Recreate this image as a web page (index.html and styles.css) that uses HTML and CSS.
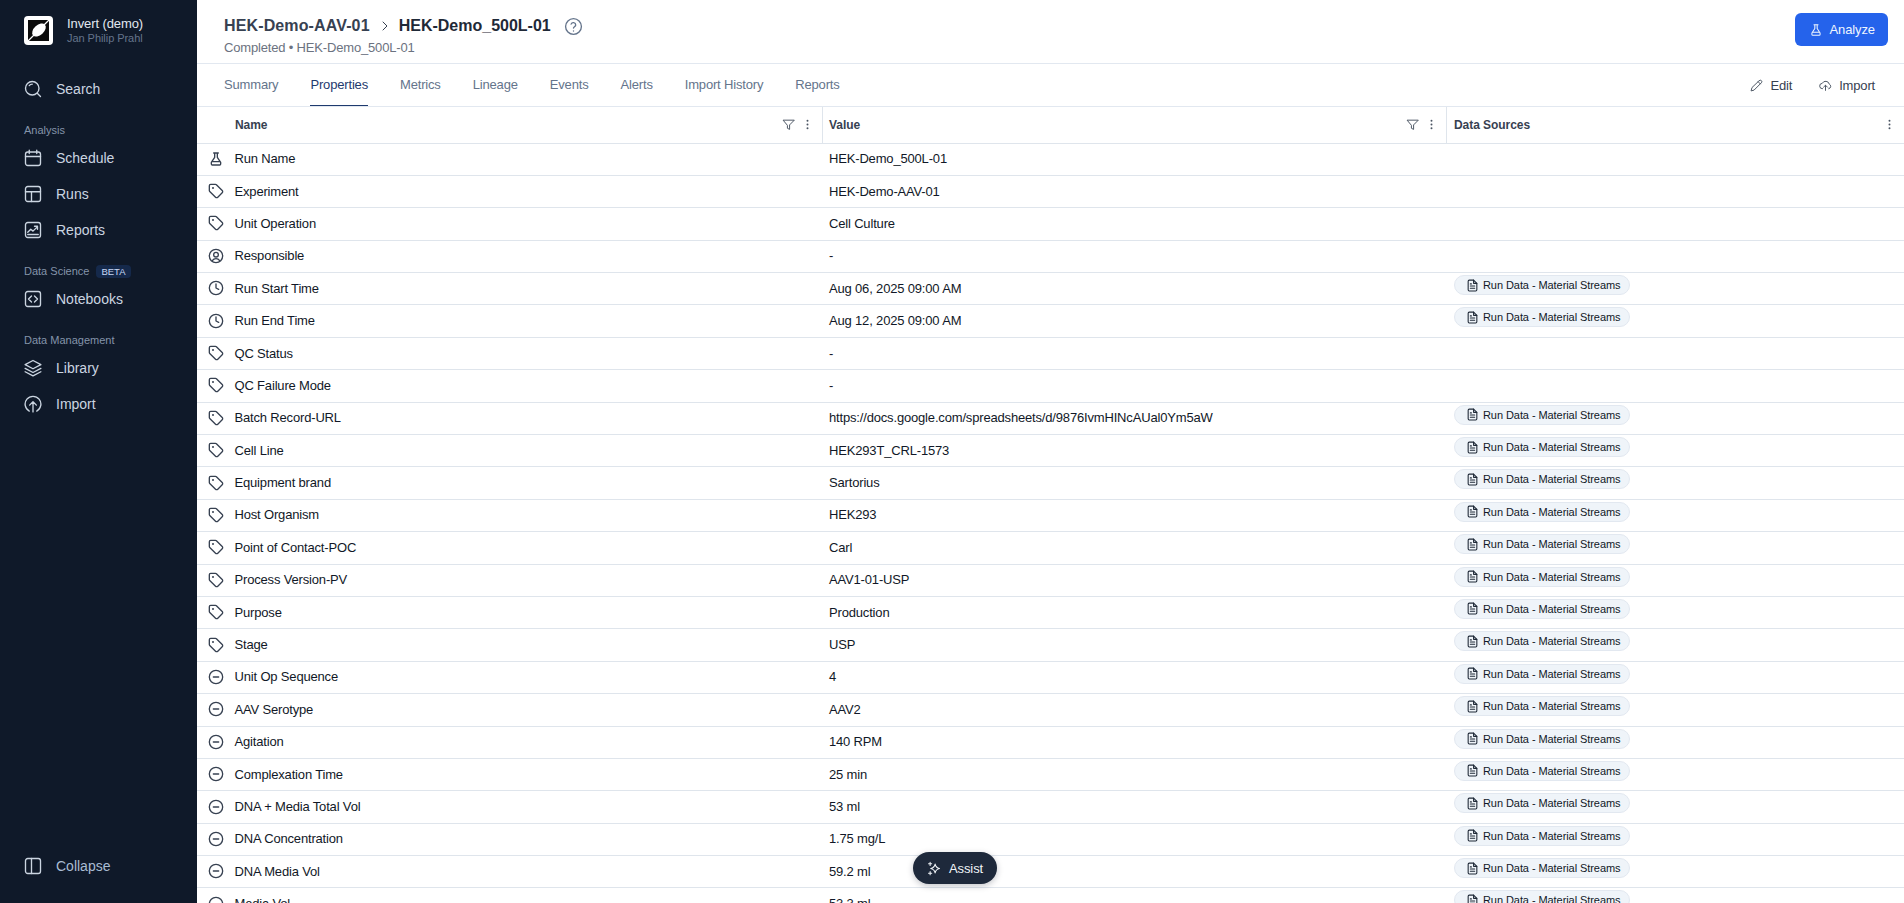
FILE: index.html
```html
<!DOCTYPE html>
<html lang="en">
<head>
<meta charset="utf-8">
<title>HEK-Demo_500L-01</title>
<link rel="stylesheet" href="styles.css">
</head>
<body>
<svg class="defs" aria-hidden="true">
  <symbol id="i-flask" viewBox="0 0 24 24"><path d="M8.500 3h7M10 3v6.500L5 17v2.500A1.500 1.500 0 0 0 6.500 21h11a1.500 1.500 0 0 0 1.500-1.500V17L14 9.500V3M6 16h12"/></symbol>
  <symbol id="i-tag" viewBox="0 0 24 24"><path d="M12.600 2.600a2 2 0 0 0-1.400-.6H4a2 2 0 0 0-2 2v7.200a2 2 0 0 0 .6 1.400l8.700 8.700a2.400 2.400 0 0 0 3.400 0l6.600-6.600a2.400 2.400 0 0 0 0-3.400z"/><circle cx="7.500" cy="7.500" r=".6"/></symbol>
  <symbol id="i-user" viewBox="0 0 24 24"><circle cx="12" cy="12" r="10"/><circle cx="12" cy="10" r="3.500"/><path d="M6.500 19a6.500 6.500 0 0 1 11 0"/></symbol>
  <symbol id="i-clock" viewBox="0 0 24 24"><circle cx="12" cy="12" r="10"/><path d="M12 6v6l4 2"/></symbol>
  <symbol id="i-minus" viewBox="0 0 24 24"><circle cx="12" cy="12" r="10"/><path d="M8 12h8"/></symbol>
  <symbol id="i-file" viewBox="0 0 24 24"><path d="M14 2H6a2 2 0 0 0-2 2v16a2 2 0 0 0 2 2h12a2 2 0 0 0 2-2V8z"/><path d="M14 2v6h6M8 13h8M8 17h8M8 9h2"/></symbol>
  <symbol id="i-filter" viewBox="0 0 24 24"><path d="M22 4H2l8 9.500V19l4 2v-7.500z"/></symbol>
  <symbol id="i-more" viewBox="0 0 24 24"><circle class="solid" cx="12" cy="5" r="1.800"/><circle class="solid" cx="12" cy="12" r="1.800"/><circle class="solid" cx="12" cy="19" r="1.800"/></symbol>
</svg>

<div class="app">
  <aside class="sidebar">
    <div class="brand">
      <svg class="logo" viewBox="0 0 29 29"><rect class="logo-edge" width="29" height="29" rx="4"/><rect class="logo-ink" x="4" y="4" width="21" height="21"/><ellipse class="logo-edge" cx="15" cy="14" rx="8" ry="5" transform="rotate(-42 15 14)"/><path class="logo-line" d="M4.500 24.500 24.500 4.500"/></svg>
      <div class="brand-text">
        <div class="brand-name">Invert (demo)</div>
        <div class="brand-user">Jan Philip Prahl</div>
      </div>
    </div>
    <nav class="nav">
      <a class="nav-item search-item"><svg class="nav-icon" viewBox="0 0 24 24"><circle cx="11" cy="11" r="9"/><path d="m18 18 4 4M7 7.500a5 5 0 0 1 4-2"/></svg>Search</a>
      <div class="nav-label">Analysis</div>
      <a class="nav-item"><svg class="nav-icon" viewBox="0 0 24 24"><rect x="2" y="4" width="20" height="18" rx="3"/><path d="M2 10h20M7 1.500V6M17 1.500V6"/></svg>Schedule</a>
      <a class="nav-item"><svg class="nav-icon" viewBox="0 0 24 24"><rect x="2" y="2" width="20" height="20" rx="3"/><path d="M2 9h20M10 9v13"/></svg>Runs</a>
      <a class="nav-item"><svg class="nav-icon" viewBox="0 0 24 24"><rect x="2" y="2" width="20" height="20" rx="3"/><path d="m5 15 4-4 3 2.500 6-6M14 7h4v4M5 18h14"/></svg>Reports</a>
      <div class="nav-label label-beta">Data Science <span class="beta">BETA</span></div>
      <a class="nav-item"><svg class="nav-icon" viewBox="0 0 24 24"><rect x="2" y="2" width="20" height="20" rx="3"/><path d="M10 8l-4 4 4 4M14 8l4 4-4 4"/></svg>Notebooks</a>
      <div class="nav-label">Data Management</div>
      <a class="nav-item"><svg class="nav-icon" viewBox="0 0 24 24"><path d="m12 2 10.500 5.500L12 13 1.500 7.500z"/><path d="m1.500 12.500 10.500 5.500 10.500-5.500M1.500 17 12 22.500 22.500 17"/></svg>Library</a>
      <a class="nav-item"><svg class="nav-icon" viewBox="0 0 24 24"><path d="M7 21.500a10.500 10.500 0 1 1 10 0"/><path d="M12 22.500V9M7.500 13.500 12 9l4.500 4.500"/></svg>Import</a>
    </nav>
    <a class="nav-item collapse-item"><svg class="nav-icon" viewBox="0 0 24 24"><rect x="2" y="2" width="20" height="20" rx="3"/><path d="M10 2v20"/></svg>Collapse</a>
  </aside>

  <main class="main">
    <header class="topbar">
      <div>
        <div class="crumbs">
          <span class="crumb-parent">HEK-Demo-AAV-01</span>
          <svg class="crumb-sep" viewBox="0 0 24 24"><path d="m8 4 8 8-8 8"/></svg>
          <span class="crumb-current">HEK-Demo_500L-01</span>
          <svg class="help" viewBox="0 0 24 24"><circle cx="12" cy="12" r="10"/><path d="M9 9a3 3 0 0 1 5.800 1c0 2-2.800 2.500-2.800 4M12 17.500v.2"/></svg>
        </div>
        <div class="subtitle">Completed • HEK-Demo_500L-01</div>
      </div>
      <button class="analyze"><svg class="btn-icon" viewBox="0 0 24 24"><use href="#i-flask"/></svg>Analyze</button>
    </header>

    <div class="tabs">
      <a class="tab">Summary</a>
      <a class="tab active">Properties</a>
      <a class="tab">Metrics</a>
      <a class="tab">Lineage</a>
      <a class="tab">Events</a>
      <a class="tab">Alerts</a>
      <a class="tab">Import History</a>
      <a class="tab">Reports</a>
      <div class="tab-actions">
        <a class="action"><svg class="act-icon" viewBox="0 0 24 24"><path d="M17 3a2.800 2.800 0 0 1 4 4L7.500 20.500 2 22l1.500-5.500zM15 5l4 4"/></svg>Edit</a>
        <a class="action"><svg class="act-icon" viewBox="0 0 24 24"><path d="M6.500 18A5 5 0 0 1 6 8a7 7 0 0 1 13 1.500 4.500 4.500 0 0 1-1 8.500M12 21v-9M8.500 15 12 11.500l3.500 3.500"/></svg>Import</a>
      </div>
    </div>

    <div class="table">
      <div class="row head">
        <div class="cell name-head"><span class="grow">Name</span><svg class="hicon" viewBox="0 0 24 24"><use href="#i-filter"/></svg><svg class="hicon" viewBox="0 0 24 24"><use href="#i-more"/></svg></div>
        <div class="cell"><span class="grow">Value</span><svg class="hicon" viewBox="0 0 24 24"><use href="#i-filter"/></svg><svg class="hicon" viewBox="0 0 24 24"><use href="#i-more"/></svg></div>
        <div class="cell"><span class="grow">Data Sources</span><svg class="hicon" viewBox="0 0 24 24"><use href="#i-more"/></svg></div>
      </div>
      <div class="row"><div class="cell name"><svg class="ricon"><use href="#i-flask"/></svg>Run Name</div><div class="cell">HEK-Demo_500L-01</div><div class="cell"></div></div>
      <div class="row"><div class="cell name"><svg class="ricon"><use href="#i-tag"/></svg>Experiment</div><div class="cell">HEK-Demo-AAV-01</div><div class="cell"></div></div>
      <div class="row"><div class="cell name"><svg class="ricon"><use href="#i-tag"/></svg>Unit Operation</div><div class="cell">Cell Culture</div><div class="cell"></div></div>
      <div class="row"><div class="cell name"><svg class="ricon"><use href="#i-user"/></svg>Responsible</div><div class="cell">-</div><div class="cell"></div></div>
      <div class="row"><div class="cell name"><svg class="ricon"><use href="#i-clock"/></svg>Run Start Time</div><div class="cell">Aug 06, 2025 09:00 AM</div><div class="cell"><span class="chip"><svg class="chip-icon"><use href="#i-file"/></svg>Run Data - Material Streams</span></div></div>
      <div class="row"><div class="cell name"><svg class="ricon"><use href="#i-clock"/></svg>Run End Time</div><div class="cell">Aug 12, 2025 09:00 AM</div><div class="cell"><span class="chip"><svg class="chip-icon"><use href="#i-file"/></svg>Run Data - Material Streams</span></div></div>
      <div class="row"><div class="cell name"><svg class="ricon"><use href="#i-tag"/></svg>QC Status</div><div class="cell">-</div><div class="cell"></div></div>
      <div class="row"><div class="cell name"><svg class="ricon"><use href="#i-tag"/></svg>QC Failure Mode</div><div class="cell">-</div><div class="cell"></div></div>
      <div class="row"><div class="cell name"><svg class="ricon"><use href="#i-tag"/></svg>Batch Record-URL</div><div class="cell">https://docs.google.com/spreadsheets/d/9876IvmHINcAUal0Ym5aW</div><div class="cell"><span class="chip"><svg class="chip-icon"><use href="#i-file"/></svg>Run Data - Material Streams</span></div></div>
      <div class="row"><div class="cell name"><svg class="ricon"><use href="#i-tag"/></svg>Cell Line</div><div class="cell">HEK293T_CRL-1573</div><div class="cell"><span class="chip"><svg class="chip-icon"><use href="#i-file"/></svg>Run Data - Material Streams</span></div></div>
      <div class="row"><div class="cell name"><svg class="ricon"><use href="#i-tag"/></svg>Equipment brand</div><div class="cell">Sartorius</div><div class="cell"><span class="chip"><svg class="chip-icon"><use href="#i-file"/></svg>Run Data - Material Streams</span></div></div>
      <div class="row"><div class="cell name"><svg class="ricon"><use href="#i-tag"/></svg>Host Organism</div><div class="cell">HEK293</div><div class="cell"><span class="chip"><svg class="chip-icon"><use href="#i-file"/></svg>Run Data - Material Streams</span></div></div>
      <div class="row"><div class="cell name"><svg class="ricon"><use href="#i-tag"/></svg>Point of Contact-POC</div><div class="cell">Carl</div><div class="cell"><span class="chip"><svg class="chip-icon"><use href="#i-file"/></svg>Run Data - Material Streams</span></div></div>
      <div class="row"><div class="cell name"><svg class="ricon"><use href="#i-tag"/></svg>Process Version-PV</div><div class="cell">AAV1-01-USP</div><div class="cell"><span class="chip"><svg class="chip-icon"><use href="#i-file"/></svg>Run Data - Material Streams</span></div></div>
      <div class="row"><div class="cell name"><svg class="ricon"><use href="#i-tag"/></svg>Purpose</div><div class="cell">Production</div><div class="cell"><span class="chip"><svg class="chip-icon"><use href="#i-file"/></svg>Run Data - Material Streams</span></div></div>
      <div class="row"><div class="cell name"><svg class="ricon"><use href="#i-tag"/></svg>Stage</div><div class="cell">USP</div><div class="cell"><span class="chip"><svg class="chip-icon"><use href="#i-file"/></svg>Run Data - Material Streams</span></div></div>
      <div class="row"><div class="cell name"><svg class="ricon"><use href="#i-minus"/></svg>Unit Op Sequence</div><div class="cell">4</div><div class="cell"><span class="chip"><svg class="chip-icon"><use href="#i-file"/></svg>Run Data - Material Streams</span></div></div>
      <div class="row"><div class="cell name"><svg class="ricon"><use href="#i-minus"/></svg>AAV Serotype</div><div class="cell">AAV2</div><div class="cell"><span class="chip"><svg class="chip-icon"><use href="#i-file"/></svg>Run Data - Material Streams</span></div></div>
      <div class="row"><div class="cell name"><svg class="ricon"><use href="#i-minus"/></svg>Agitation</div><div class="cell">140 RPM</div><div class="cell"><span class="chip"><svg class="chip-icon"><use href="#i-file"/></svg>Run Data - Material Streams</span></div></div>
      <div class="row"><div class="cell name"><svg class="ricon"><use href="#i-minus"/></svg>Complexation Time</div><div class="cell">25 min</div><div class="cell"><span class="chip"><svg class="chip-icon"><use href="#i-file"/></svg>Run Data - Material Streams</span></div></div>
      <div class="row"><div class="cell name"><svg class="ricon"><use href="#i-minus"/></svg>DNA + Media Total Vol</div><div class="cell">53 ml</div><div class="cell"><span class="chip"><svg class="chip-icon"><use href="#i-file"/></svg>Run Data - Material Streams</span></div></div>
      <div class="row"><div class="cell name"><svg class="ricon"><use href="#i-minus"/></svg>DNA Concentration</div><div class="cell">1.75 mg/L</div><div class="cell"><span class="chip"><svg class="chip-icon"><use href="#i-file"/></svg>Run Data - Material Streams</span></div></div>
      <div class="row"><div class="cell name"><svg class="ricon"><use href="#i-minus"/></svg>DNA Media Vol</div><div class="cell">59.2 ml</div><div class="cell"><span class="chip"><svg class="chip-icon"><use href="#i-file"/></svg>Run Data - Material Streams</span></div></div>
      <div class="row"><div class="cell name"><svg class="ricon"><use href="#i-minus"/></svg>Media Vol</div><div class="cell">53.3 ml</div><div class="cell"><span class="chip"><svg class="chip-icon"><use href="#i-file"/></svg>Run Data - Material Streams</span></div></div>
    </div>

    <button class="assist"><svg class="assist-icon" viewBox="0 0 24 24"><path d="M13 5c.8 4 2.500 6 7 7-4.500 1-6.200 3-7 7-.8-4-2.500-6-7-7 4.500-1 6.200-3 7-7zM5 2v5M2.500 4.500h5M5 17v5M2.500 19.500h5"/></svg>Assist</button>
  </main>
</div>
</body>
</html>
```
FILE: styles.css
```css
* { box-sizing: border-box; }
html, body { margin: 0; height: 100%; overflow: hidden; }
body { font-family: "Liberation Sans", Arial, sans-serif; font-size: 14px; color: #111827; background: #fff; }
a { text-decoration: none; }
svg { fill: none; stroke: currentColor; stroke-width: 2; stroke-linecap: round; stroke-linejoin: round; flex: none; }
.defs { position: absolute; width: 0; height: 0; }
.solid { fill: currentColor; stroke: none; }

.app { display: flex; height: 100%; }

.sidebar { width: 197px; flex: none; background: #0f1929; color: #cbd5e1; display: flex; flex-direction: column; padding: 16px 0 19px 24px; }
.brand { display: flex; align-items: center; gap: 14px; height: 29px; }
.logo { width: 29px; height: 29px; stroke: none; }
.logo-edge { fill: #fff; }
.logo-ink { fill: #0b0b0b; }
.logo-line { stroke: #fff; stroke-width: 1.200; }
.brand-text { line-height: 14px; }
.brand-name { font-size: 13px; letter-spacing: -0.1px; color: #e2e8f0; }
.brand-user { font-size: 11px; letter-spacing: -0.05px; color: #64748b; }
.nav { display: flex; flex-direction: column; flex: 1; margin-top: 26px; }
.nav-item { display: flex; align-items: center; gap: 14px; height: 36px; color: #cbd5e1; font-size: 14px; }
.nav-icon { width: 18px; height: 18px; stroke-width: 1.800; color: #cbd5e1; }
.nav-label { height: 20px; margin-top: 13px; line-height: 20px; font-size: 11px; color: #8494aa; }
.label-beta { display: flex; align-items: center; gap: 7px; }
.beta { background: #15294b; color: #c7d7f5; font-size: 9.500px; line-height: 13px; padding: 0 5px; border-radius: 4px; }
.collapse-item { color: #a9bcd3; }

.main { flex: 1; min-width: 0; display: flex; flex-direction: column; position: relative; }

.topbar { height: 64px; flex: none; display: flex; justify-content: space-between; align-items: flex-start; padding: 14px 16px 0 27px; border-bottom: 1px solid #e2e8f0; }
.crumbs { display: flex; align-items: center; height: 24px; font-size: 16px; font-weight: 700; }
.crumb-parent { color: #374151; letter-spacing: .13px; }
.crumb-sep { width: 12px; height: 12px; margin: 0 8px 0 9px; color: #374151; }
.crumb-current { color: #1f2937; }
.help { width: 19px; height: 19px; margin-left: 13px; color: #64748b; stroke-width: 1.700; }
.subtitle { font-size: 13px; letter-spacing: -0.17px; line-height: 15px; color: #6b7280; margin-top: 2px; }
.analyze { display: flex; align-items: center; gap: 4px; height: 33px; margin-top: -1px; padding: 0 13px 0 14px; background: #2563eb; color: #eff6ff; border: 0; border-radius: 6px; font: inherit; font-size: 13px; letter-spacing: -0.1px; }
.btn-icon { width: 14px; height: 14px; stroke-width: 1.800; margin-right: 2px; }

.tabs { height: 43px; flex: none; display: flex; padding: 0 29px 0 27px; gap: 32px; border-bottom: 1px solid #e2e8f0; font-size: 13px; letter-spacing: -0.17px; }
.tab { display: flex; align-items: center; color: #64748b; border-bottom: 1.500px solid transparent; }
.tab.active { color: #1e3a6e; border-bottom-color: #1e3a6e; }
.tab-actions { margin-left: auto; display: flex; align-items: center; gap: 27px; }
.action { display: flex; align-items: center; gap: 7px; color: #374151; font-size: 13px; }
.act-icon { width: 13px; height: 13px; stroke-width: 1.800; color: #4b5563; }

.table { flex: 1; overflow: hidden; }
.row { display: grid; grid-template-columns: 625px 624px 1fr; height: 32.400px; border-bottom: 1.500px solid #dfe5ec; font-size: 13px; letter-spacing: -0.17px; }
.cell { display: flex; align-items: center; min-width: 0; padding: 0 0 1px 7px; position: relative; }
.cell:last-child { padding-left: 8px; }
.row.head { height: 36.500px; font-size: 12px; font-weight: 700; color: #374151; letter-spacing: -0.05px; }
.head .cell { padding: 0 8px 0 6px; gap: 6px; }
.head .cell:last-child { padding-left: 7px; }
.head .cell + .cell { border-left: 1px solid #dfe5ec; }
.head .name-head { padding-left: 38px; }
.grow { flex: 1; }
.hicon { width: 13px; height: 13px; color: #4b5563; stroke-width: 1.800; }
.name { padding-left: 11px; }
.ricon { width: 16px; height: 16px; margin-right: 10.500px; color: #374151; stroke-width: 2; }
.chip { display: inline-flex; align-items: center; gap: 4px; height: 20px; align-self: flex-start; margin-top: 2px; padding: 0 8px 0 11px; background: #eff4f9; border: 1px solid #e2e8f0; border-radius: 10px; font-size: 11px; letter-spacing: -0.07px; color: #111827; }
.chip-icon { width: 13px; height: 13px; color: #1f2937; }

.assist { position: absolute; left: 716px; top: 852px; display: flex; align-items: center; gap: 7px; height: 32px; padding: 0 14px; background: #1e293b; color: #f1f5f9; border: 0; border-radius: 16px; font: inherit; font-size: 13px; letter-spacing: -0.1px; box-shadow: 0 2px 6px rgba(15, 23, 42, .25); }
.assist-icon { width: 15px; height: 15px; stroke-width: 1.700; }
```
